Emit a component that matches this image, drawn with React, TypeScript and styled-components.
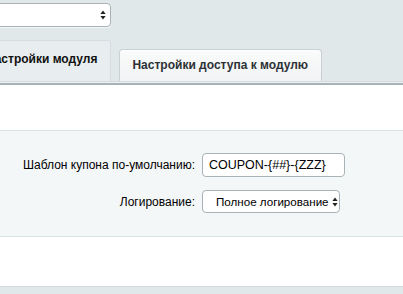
import React from "react";
import styled, { createGlobalStyle } from "styled-components";

const GlobalStyle = createGlobalStyle`
  html, body {
    margin: 0;
    padding: 0;
    background: #e0e8ea;
    font-family: "Liberation Sans", Arial, Helvetica, sans-serif;
    overflow: hidden;
  }
`;

const Page = styled.div`
  width: 403px;
  height: 294px;
  overflow: hidden;
  background: #e0e8ea;
`;

const TopBar = styled.div`
  padding-top: 3px;
  height: 24px;
`;

const ArrowIcon = styled.svg`
  flex-shrink: 0;
`;

const Arrows = () => (
  <ArrowIcon width="6" height="10" viewBox="0 0 6 10">
    <path d="M3 0.5 L5.6 4 L0.4 4 Z" fill="#222" />
    <path d="M3 9.5 L5.6 6 L0.4 6 Z" fill="#222" />
  </ArrowIcon>
);

const SelectBox = styled.div<{ $width: number; $height: number; $shift?: number }>`
  box-sizing: border-box;
  width: ${(p) => p.$width}px;
  height: ${(p) => p.$height}px;
  margin-left: ${(p) => p.$shift || 0}px;
  background: #fff;
  border: 1px solid #a9b2b6;
  border-radius: 4px;
  box-shadow: 0 1px 0 #f3f6f7;
  display: flex;
  align-items: center;
  justify-content: space-between;
  gap: 3px;
  padding: 0 4px 0 13px;
  font-size: 11.6px;
  color: #000;
  white-space: nowrap;
  overflow: hidden;
`;

const Tabs = styled.div`
  display: flex;
  align-items: flex-end;
  gap: 8px;
  height: 41px;
  margin-top: 13px;
`;

const Tab = styled.div<{ $active?: boolean }>`
  box-sizing: border-box;
  display: flex;
  align-items: center;
  white-space: nowrap;
  font-size: 12px;
  font-weight: bold;
  color: #2c3136;
  border-radius: 4px 4px 0 0;
  ${(p) =>
    p.$active
      ? `
    height: 41px;
    margin-left: -28px;
    padding: 0 13px 4px 13px;
    background: #e8eef0;
    border: 1px solid #d4dde0;
    border-bottom: none;
    color: #111;
  `
      : `
    height: 32px;
    padding: 0 13px 1px 12px;
    background: linear-gradient(#fafbfb, #f1f3f4);
    border: 1px solid #c9d1d4;
    border-bottom: none;
    box-shadow: inset 0 1px 0 #fff;
  `}
`;

const TabLine = styled.div`
  height: 1px;
  background: #eef2f3;
  border-top: 1px solid #d3dbde;
  border-bottom: 2px solid #a7b3b7;
`;

const WhiteBlock = styled.div<{ $height: number }>`
  height: ${(p) => p.$height}px;
  background: #fff;
`;

const FormBlock = styled.div`
  box-sizing: border-box;
  height: 107px;
  background: #f4f7f8;
  border-top: 1px solid #dbe3e6;
  border-bottom: 1px solid #dbe3e6;
  padding-top: 22px;
  display: grid;
  grid-template-columns: 195px 1fr;
  column-gap: 7px;
  row-gap: 13px;
  align-content: start;
`;

const Label = styled.div`
  text-align: right;
  align-self: center;
  font-size: 12px;
  color: #000;
  white-space: nowrap;
`;

const Input = styled.div`
  box-sizing: border-box;
  width: 143px;
  height: 24px;
  background: #fff;
  border: 1px solid #a9b2b6;
  border-radius: 4px;
  display: flex;
  align-items: center;
  padding-left: 6px;
  font-size: 12.5px;
  color: #000;
  white-space: nowrap;
`;

const BottomLine = styled.div`
  height: 1px;
  background: #d2dadd;
`;

export default function App() {
  return (
    <Page>
      <GlobalStyle />
      <TopBar>
        <SelectBox $width={130} $height={24} $shift={-19}>
          <span />
          <Arrows />
        </SelectBox>
      </TopBar>
      <Tabs>
        <Tab $active>Настройки модуля</Tab>
        <Tab>Настройки доступа к модулю</Tab>
      </Tabs>
      <TabLine />
      <WhiteBlock $height={45} />
      <FormBlock>
        <Label>Шаблон купона по-умолчанию:</Label>
        <div>
          <Input>COUPON-{"{##}"}-{"{ZZZ}"}</Input>
        </div>
        <Label>Логирование:</Label>
        <div>
          <SelectBox $width={138} $height={23}>
            <span>Полное логирование</span>
            <Arrows />
          </SelectBox>
        </div>
      </FormBlock>
      <WhiteBlock $height={49} />
      <BottomLine />
    </Page>
  );
}
